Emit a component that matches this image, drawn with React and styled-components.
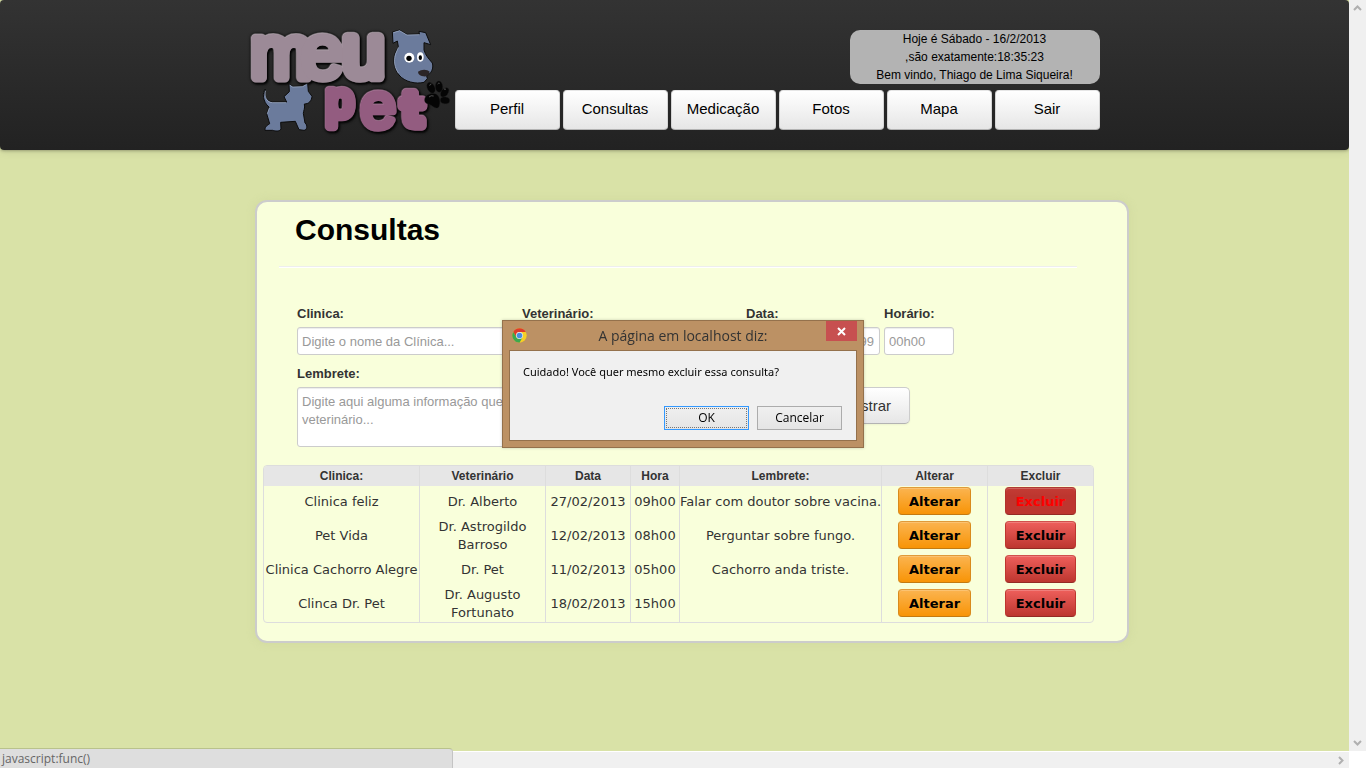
import React from "react";
import styled, { createGlobalStyle, css } from "styled-components";

const sans = '"Liberation Sans", Arial, sans-serif';
const verdana = '"DejaVu Sans", Verdana, sans-serif';
const segoe = '"Open Sans", "Segoe UI", sans-serif';

const GlobalStyle = createGlobalStyle`
  * { box-sizing: border-box; }
  body {
    margin: 0;
    background: #d9e2a7;
    color: #333;
    font: 13px/18px ${sans};
  }
`;

const Window = styled.div`
  display: grid;
  grid-template: minmax(0, 1fr) 17px / minmax(0, 1fr) 17px;
  height: 100vh;
`;

const Page = styled.div`
  overflow: hidden;
  background: #d9e2a7;
`;

const Scrollbar = styled.div`
  display: flex;
  flex-direction: ${(p) => (p.$vertical ? "column" : "row")};
  justify-content: ${(p) => (p.$vertical ? "space-between" : "flex-end")};
  align-items: center;
  padding: ${(p) => (p.$vertical ? "4px 0" : "0 4px")};
  background: #f0f0f0;
  ${(p) => !p.$vertical && css`border-top: 1px solid #fff;`}
`;

const Corner = styled.div`
  background: #fff;
`;

const Header = styled.header`
  display: flex;
  justify-content: center;
  height: 150px;
  border-radius: 4px;
  background: linear-gradient(#333, #222);
  box-shadow: 0 1px 3px rgba(0, 0, 0, 0.25), 0 1px 10px rgba(0, 0, 0, 0.1);
`;

const HeaderInner = styled.div`
  display: flex;
  justify-content: space-between;
  width: 850px;
  padding-top: 27px;
`;

const LogoLink = styled.a`
  width: 200px;
  height: 110px;
  svg { display: block; overflow: visible; }
`;

const HeaderSide = styled.div`
  display: flex;
  flex-direction: column;
  align-items: flex-end;
  gap: 6px;
  padding-top: 3px;
`;

const Greeting = styled.div`
  width: 250px;
  border-radius: 10px;
  background: #b3b3b3;
  color: #000;
  font-size: 12px;
  line-height: 18px;
  text-align: center;
`;

const Nav = styled.nav`
  display: flex;
  gap: 3px;
`;

const NavLink = styled.a`
  width: 105px;
  height: 40px;
  border: 1px solid #ccc;
  border-color: #e6e6e6 #d5d5d5 #b3b3b3;
  border-radius: 4px;
  background: linear-gradient(#fff, #e6e6e6);
  color: #000;
  font-size: 15px;
  line-height: 36px;
  text-align: center;
  text-decoration: none;
`;

const Main = styled.main`
  display: flex;
  justify-content: center;
  padding: 50px 0 0 35px;
`;

const Card = styled.section`
  width: 874px;
  padding: 10px 6px 18px;
  border: 2px solid #ccc;
  border-radius: 12px;
  background: #f9ffdb;
  box-shadow: 0 0 8px rgba(190, 200, 140, 0.3);
`;

const Title = styled.h1`
  margin: 0 44px 0 16px;
  padding: 0 16px 18px;
  border-bottom: 1px solid #eee;
  box-shadow: 0 1px 0 #fff;
  color: #000;
  font-size: 30px;
  line-height: 36px;
`;

const Form = styled.form`
  display: grid;
  grid-template-columns: 221px 220px 134px 70px;
  column-gap: 4px;
  row-gap: 10px;
  margin: 38px 0 18px 34px;
`;

const Field = styled.div`
  display: flex;
  flex-direction: column;
  gap: 4px;
  grid-column: span ${(p) => p.$span || 1};
`;

const Label = styled.label`
  font-weight: bold;
`;

const fieldStyle = css`
  width: 100%;
  padding: 4px;
  border: 1px solid #ccc;
  border-radius: 3px;
  background: #fff;
  box-shadow: inset 0 1px 1px rgba(0, 0, 0, 0.075);
  color: #555;
  font: 13px/18px ${sans};
  &::placeholder { color: #999; opacity: 1; }
`;

const Input = styled.input`
  ${fieldStyle}
  height: 28px;
`;

const TextArea = styled.textarea`
  ${fieldStyle}
  height: 60px;
  padding-top: 5px;
  resize: none;
  overflow: hidden;
`;

const Actions = styled.div`
  display: flex;
  grid-column: span 2;
  justify-content: flex-end;
  align-items: flex-start;
  padding: 22px 44px 0 0;
`;

const SubmitButton = styled.button`
  height: 37px;
  padding: 0 18px;
  border: 1px solid #ccc;
  border-bottom-color: #b3b3b3;
  border-radius: 5px;
  background: linear-gradient(#fff, #e6e6e6);
  box-shadow: 0 1px 2px rgba(0, 0, 0, 0.05);
  color: #333;
  font: 15px/18px ${sans};
`;

const Table = styled.table`
  width: 831px;
  table-layout: fixed;
  border: 1px solid #ddd;
  border-collapse: separate;
  border-spacing: 0;
  border-radius: 4px;
  overflow: hidden;
`;

const Th = styled.th`
  width: ${(p) => p.$width}px;
  height: 20px;
  padding: 0;
  background: #e6e6e6;
  font-size: 12px;
  line-height: 18px;
  & + & { border-left: 1px solid #ddd; }
`;

const Td = styled.td`
  height: 32px;
  padding: 0;
  font-family: ${verdana};
  text-align: center;
  vertical-align: middle;
  white-space: ${(p) => (p.$wrap ? "normal" : "nowrap")};
  & + & { border-left: 1px solid #ddd; }
`;

const tones = {
  warning: css`
    background: linear-gradient(#fbb450, #f89406);
    border-color: #e09a3a #d98a1c #c47a10;
  `,
  danger: css`
    background: linear-gradient(#ee5f5b, #bd362f);
    border-color: #d0504c #bd362f #942a25;
  `,
  pressed: css`
    background: linear-gradient(#c43c35, #bd362f 30%);
    border-color: #b03a35 #b0332d #942a25;
    color: #f00;
  `,
};

const RowButton = styled.button`
  display: block;
  height: 28px;
  margin: 0 auto 2px;
  padding: 1px 10px 0;
  border: 1px solid;
  border-radius: 4px;
  color: #000;
  font: bold 13px/18px ${verdana};
  box-shadow: inset 0 1px 0 rgba(255, 255, 255, 0.2);
  ${(p) => tones[p.$tone]}
`;

const Dialog = styled.div`
  position: fixed;
  inset: 0;
  width: 362px;
  height: 128px;
  margin: auto;
  padding: 0 6px 6px;
  border: 1px solid #94714c;
  background: #bc9164;
  box-shadow: 0 0 3px rgba(0, 0, 0, 0.2);
  font-family: ${segoe};
`;

const TitleBar = styled.div`
  display: grid;
  grid-template-columns: 31px 1fr 31px;
  height: 29px;
  svg { display: block; }
`;

const ChromeBox = styled.span`
  padding: 7px 3px;
`;

const DialogTitle = styled.h2`
  margin: 0;
  color: #333;
  font-size: 14px;
  font-weight: normal;
  line-height: 30px;
  text-align: center;
  white-space: nowrap;
`;

const CloseButton = styled.button`
  display: flex;
  align-items: center;
  justify-content: center;
  height: 20px;
  padding: 0;
  border: 0;
  background: #c75050;
`;

const DialogBody = styled.div`
  height: 91px;
  padding: 12px 14px 10px 13px;
  border: 1px solid #94714c;
  background: #f0f0f0;
  color: #000;
`;

const Message = styled.p`
  margin: 0 0 25px;
  font: 11px/18px "Noto Sans", ${segoe};
  white-space: nowrap;
`;

const DialogActions = styled.div`
  display: flex;
  justify-content: flex-end;
  gap: 8px;
`;

const DialogButton = styled.button`
  width: 85px;
  height: 24px;
  padding: 0;
  border: 1px solid ${(p) => (p.$focused ? "#3399ff" : "#acacac")};
  background: linear-gradient(#f0f0f0, #e5e5e5);
  color: #000;
  font: 12px/18px ${segoe};
  ${(p) => p.$focused && css`
    outline: 1px dotted #777;
    outline-offset: -3px;
  `}
`;

const StatusBar = styled.div`
  position: fixed;
  left: 0;
  bottom: 0;
  width: 453px;
  height: 20px;
  padding-left: 2px;
  border-top: 1px solid #b9c28c;
  border-right: 1px solid #c4c4c4;
  border-radius: 0 4px 0 0;
  background: #dedede;
  color: #666;
  font: 12px/20px ${segoe};
`;

const Lettering = styled.text`
  font-family: ${sans};
  fill: ${(p) => p.$color};
  stroke: ${(p) => p.$color};
  stroke-linejoin: round;
  filter: drop-shadow(-1px -2px 0 ${(p) => p.$light}) drop-shadow(0 0 4px #000)
    drop-shadow(4px 5px 2px #0a0a0a);
`;

const Letter = styled.tspan`
  font-family: ${(p) => p.$family};
  font-weight: ${(p) => (p.$bold ? "bold" : "normal")};
`;

function Logo() {
  return (
    <svg width="200" height="110" viewBox="30 21 600 330" role="img" aria-label="Meu Pet">
      <Lettering $color="#9c8a97" $light="#c9bcc5" strokeWidth="22">
        <Letter x="32" y="173" fontSize="222" strokeWidth="27" $family='"Liberation Sans Narrow", sans-serif'>m</Letter>
        <Letter x="184" y="174" fontSize="230">e</Letter>
        <Letter x="308" y="171" fontSize="224" strokeWidth="32">u</Letter>
      </Lettering>
      <Lettering $color="#935c80" $light="#c38fb0" strokeWidth="26">
        <Letter x="259" y="292" fontSize="147">p</Letter>
        <Letter x="361" y="323" fontSize="194" strokeWidth="19">e</Letter>
        <Letter x="485" y="319" fontSize="138" strokeWidth="28" $family={verdana} $bold>t</Letter>
      </Lettering>
      <g stroke="#0c0c0c" strokeWidth="3" strokeLinejoin="round">
        <path
          fill="#6b7b9c"
          d="M457 36 L479 30 L501 43 L538 42 L537 34 L557 38 L572 74 L552 68 L552 90 C556 105 566 116 577 129 C582 145 573 162 560 167 L562 176 L552 187 C528 193 494 186 477 165 C461 145 459 124 464 102 L475 80 L472 63 L459 70 Z"
        />
        <path
          fill="#6b7b9c"
          d="M147 192 L159 199 L187 198 L203 190 L205 214 L216 229 C215 242 207 252 193 252 C196 265 190 273 190 280 L195 309 C204 315 201 331 192 331 L177 329 L166 304 L122 307 L123 327 C118 336 105 333 98 331 L75 331 C73 319 86 314 89 311 L80 281 L87 261 C68 246 66 217 76 207 C71 226 80 244 98 246 L140 246 L132 230 L148 215 Z"
        />
      </g>
      <path fill="none" stroke="#a9b6cf" strokeWidth="2" d="M460 38 L479 32 L501 45 L537 44 M475 82 L466 104 C461 124 463 142 476 160 M149 195 L158 201 L187 200 L200 193 M88 264 L82 281 M77 212 C72 230 80 248 98 248 L138 248" />
      <circle cx="508" cy="113" r="15" fill="#fff" />
      <ellipse cx="541" cy="111" rx="10" ry="14" fill="#fff" />
      <circle cx="507" cy="115" r="8" fill="#000" />
      <ellipse cx="541" cy="113" rx="5" ry="7" fill="#000" />
      <path fill="#2b2527" d="M534 155 C544 147 562 147 569 155 C568 166 558 171 549 169 C540 167 534 163 534 155 Z" />
      <g fill="#050505" stroke="#1c1c1c" strokeWidth="1">
        <path d="M554 238 C556 224 574 217 588 222 C600 229 602 247 597 260 C588 272 575 253 564 252 C556 250 553 245 554 238 Z" />
        <ellipse cx="573" cy="203" rx="11" ry="17" transform="rotate(-28 573 203)" />
        <ellipse cx="597" cy="200" rx="11" ry="17" transform="rotate(-4 597 200)" />
        <ellipse cx="614" cy="217" rx="10" ry="16" transform="rotate(38 614 217)" />
        <ellipse cx="615" cy="241" rx="14" ry="10" transform="rotate(8 615 241)" />
      </g>
      <path fill="none" stroke="#777" strokeWidth="2" d="M567 231 q6 -6 14 -3 M569 197 q1 -5 5 -5 M593 192 q3 -4 6 -2 M612 208 q4 -3 6 1" />
    </svg>
  );
}

function ChromeIcon() {
  return (
    <svg width="15" height="15" viewBox="0 0 48 48" aria-hidden="true">
      <circle cx="24" cy="24" r="23" fill="#f7cf25" />
      <path fill="#de3b2c" d="M4 12.500 A23 23 0 0 1 44 12.500 L24 12.500 A11.500 11.500 0 0 0 14 29.700 Z" />
      <path fill="#3ea84f" d="M4 12.500 L14 29.700 A11.500 11.500 0 0 0 34 29.700 L24 47 A23 23 0 0 1 4 12.500 Z" />
      <circle cx="24" cy="24" r="11" fill="#eee" />
      <circle cx="24" cy="24" r="9" fill="#4a8ee0" />
    </svg>
  );
}

function Arrow({ d }) {
  return (
    <svg width="9" height="9" viewBox="0 0 9 9" aria-hidden="true">
      <path d={d} fill="none" stroke="#b0b0b0" strokeWidth="2" />
    </svg>
  );
}

const menu = ["Perfil", "Consultas", "Medicação", "Fotos", "Mapa", "Sair"];

const columns = [
  ["Clinica:", 155],
  ["Veterinário", 126],
  ["Data", 85],
  ["Hora", 49],
  ["Lembrete:", 202],
  ["Alterar", 106],
  ["Excluir", 106],
];

const rows = [
  ["Clinica feliz", "Dr. Alberto", "27/02/2013", "09h00", "Falar com doutor sobre vacina."],
  ["Pet Vida", "Dr. Astrogildo Barroso", "12/02/2013", "08h00", "Perguntar sobre fungo."],
  ["Clinica Cachorro Alegre", "Dr. Pet", "11/02/2013", "05h00", "Cachorro anda triste."],
  ["Clinca Dr. Pet", "Dr. Augusto Fortunato", "18/02/2013", "15h00", ""],
];

export default function App() {
  return (
    <>
      <GlobalStyle />
      <Window>
        <Page>
          <Header>
            <HeaderInner>
              <LogoLink href="#inicio"><Logo /></LogoLink>
              <HeaderSide>
                <Greeting>
                  <div>Hoje é Sábado - 16/2/2013</div>
                  <div>,são exatamente:18:35:23</div>
                  <div>Bem vindo, Thiago de Lima Siqueira!</div>
                </Greeting>
                <Nav>
                  {menu.map((m) => <NavLink key={m} href={`#${m}`}>{m}</NavLink>)}
                </Nav>
              </HeaderSide>
            </HeaderInner>
          </Header>
          <Main>
            <Card>
              <Title>Consultas</Title>
              <Form onSubmit={(e) => e.preventDefault()}>
                <Field>
                  <Label htmlFor="clinica">Clinica:</Label>
                  <Input id="clinica" placeholder="Digite o nome da Clínica..." />
                </Field>
                <Field>
                  <Label htmlFor="veterinario">Veterinário:</Label>
                  <Input id="veterinario" />
                </Field>
                <Field>
                  <Label htmlFor="data">Data:</Label>
                  <Input id="data" placeholder="Exemplo: 99/99/9999" />
                </Field>
                <Field>
                  <Label htmlFor="horario">Horário:</Label>
                  <Input id="horario" placeholder="00h00" />
                </Field>
                <Field $span={2}>
                  <Label htmlFor="lembrete">Lembrete:</Label>
                  <TextArea
                    id="lembrete"
                    placeholder="Digite aqui alguma informação que você queira passar para o seu veterinário..."
                  />
                </Field>
                <Actions>
                  <SubmitButton type="submit">Cadastrar</SubmitButton>
                </Actions>
              </Form>
              <Table>
                <thead>
                  <tr>
                    {columns.map(([name, width]) => <Th key={name} $width={width} scope="col">{name}</Th>)}
                  </tr>
                </thead>
                <tbody>
                  {rows.map((row, r) => (
                    <tr key={row[0]}>
                      {row.map((cell, c) => <Td key={c} $wrap={c === 1}>{cell}</Td>)}
                      <Td><RowButton type="button" $tone="warning">Alterar</RowButton></Td>
                      <Td><RowButton type="button" $tone={r === 0 ? "pressed" : "danger"}>Excluir</RowButton></Td>
                    </tr>
                  ))}
                </tbody>
              </Table>
            </Card>
          </Main>
        </Page>
        <Scrollbar $vertical>
          <Arrow d="M1 6 L4.500 2.500 L8 6" />
          <Arrow d="M1 3 L4.500 6.500 L8 3" />
        </Scrollbar>
        <Scrollbar>
          <Arrow d="M3 1 L6.500 4.500 L3 8" />
        </Scrollbar>
        <Corner />
      </Window>
      <Dialog role="dialog" aria-labelledby="dialog-title">
        <TitleBar>
          <ChromeBox><ChromeIcon /></ChromeBox>
          <DialogTitle id="dialog-title">A página em localhost diz:</DialogTitle>
          <CloseButton type="button" aria-label="Fechar">
            <svg width="9" height="9" viewBox="0 0 9 9" aria-hidden="true">
              <path d="M1 1 L8 8 M8 1 L1 8" stroke="#fff" strokeWidth="2" />
            </svg>
          </CloseButton>
        </TitleBar>
        <DialogBody>
          <Message>Cuidado! Você quer mesmo excluir essa consulta?</Message>
          <DialogActions>
            <DialogButton type="button" $focused>OK</DialogButton>
            <DialogButton type="button">Cancelar</DialogButton>
          </DialogActions>
        </DialogBody>
      </Dialog>
      <StatusBar>javascript:func()</StatusBar>
    </>
  );
}
